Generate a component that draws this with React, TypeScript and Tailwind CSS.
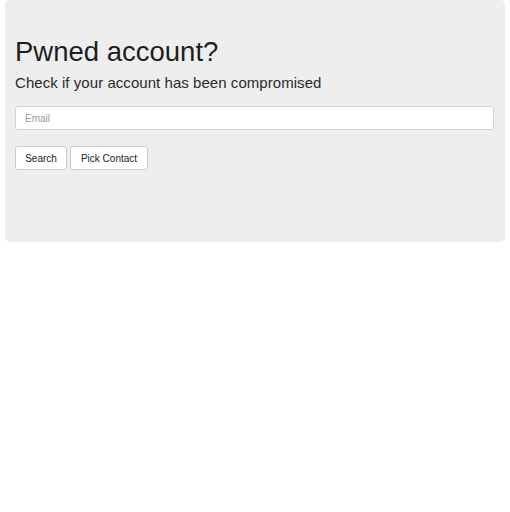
export default function App() {
  return (
    <div className="w-[510px] h-[512px] bg-white" style={{ fontFamily: '"Liberation Sans", Arial, sans-serif' }}>
      <div className="mx-[5px] h-[242px] rounded-[5px] bg-[#eeeeee] px-[10px] pt-[34px]">
        <h1 className="text-[27.5px] leading-[36px] text-[#1e1e1e] font-normal">Pwned account?</h1>
        <p className="mt-[3px] text-[15px] leading-[20px] text-[#2a2a2a] font-light tracking-[0.05px]">Check if your account has been compromised</p>
        <input
          className="mt-[13px] block w-[479px] h-[24px] rounded-[3px] border border-[#d4d4d4] bg-white px-[9px] text-[10px] text-[#555] placeholder:text-[#999] outline-none"
          placeholder="Email"
        />
        <div className="mt-[16px] flex gap-[3px]">
          <button className="h-[24px] w-[52px] rounded-[3px] border border-[#ccc] bg-white text-[10px] text-[#222]">Search</button>
          <button className="h-[24px] w-[78px] rounded-[3px] border border-[#ccc] bg-white text-[10px] text-[#222]">Pick Contact</button>
        </div>
      </div>
    </div>
  );
}
